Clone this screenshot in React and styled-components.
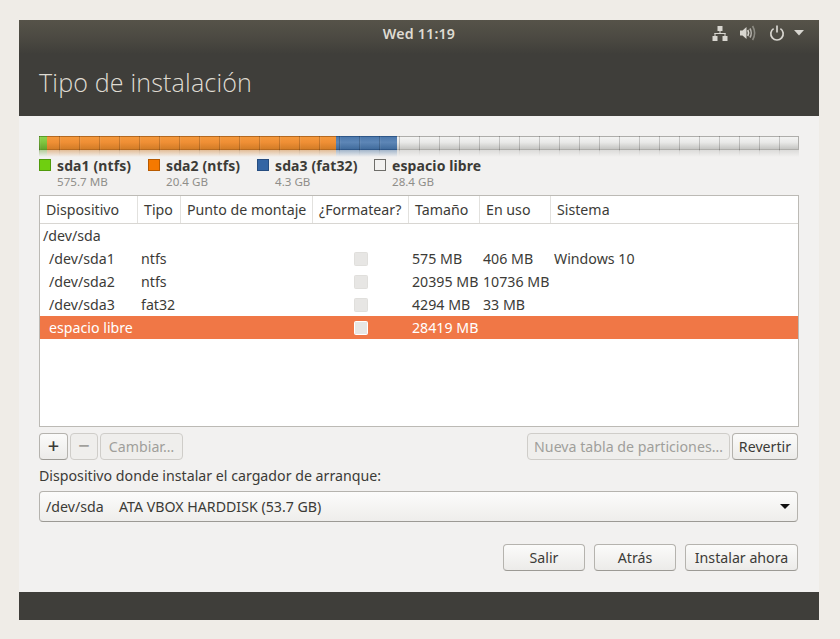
import React from 'react';
import styled, { createGlobalStyle } from 'styled-components';

const Global = createGlobalStyle`
  html, body { margin: 0; padding: 0; background: #efece7; }
  body { font-family: "Noto Sans", "Open Sans", sans-serif; font-size: 14.2px; color: #3c3b37; }
`;

const Page = styled.div`
  width: 840px;
  height: 639px;
  padding: 20px 21px 19px 19px;
  box-sizing: border-box;
  overflow: hidden;
`;

const Window = styled.div`
  height: 600px;
  display: flex;
  flex-direction: column;
  background: #f2f1f0;
`;

const Header = styled.header`
  height: 96px;
  flex: none;
  background: linear-gradient(#565349 0, #4a4841 20px, #3f3e3a 34px, #3f3e3a 100%);
  display: flex;
  flex-direction: column;
  color: #dfdbd2;
`;

const Panel = styled.div`
  height: 26px;
  position: relative;
  display: flex;
  align-items: center;
  justify-content: center;
  font-weight: 600;
  font-size: 14.2px;
  letter-spacing: 0.2px;
`;

const Indicators = styled.div`
  position: absolute;
  left: 693px;
  top: 5px;
  display: flex;
  align-items: center;
  color: #d8d6d0;
`;

const Title = styled.h1`
  margin: 20px 0 0 20px;
  font-size: 25.1px;
  line-height: 32px;
  font-weight: 300;
  letter-spacing: 0.15px;
  font-family: "Open Sans", "Noto Sans", sans-serif;
  color: #dfdbd2;
`;

const Body = styled.main`
  flex: 1;
  padding: 20px 20px 0 20px;
  display: flex;
  flex-direction: column;
`;

const Bar = styled.div`
  position: relative;
  height: 14px;
  display: flex;
  &::after {
    content: "";
    position: absolute;
    inset: 0 0 -6px 0;
    background: repeating-linear-gradient(90deg, rgba(0, 0, 0, 0.18) 0 1px, rgba(255, 255, 255, 0.05) 1px 2px, transparent 2px 20px);
    mask-image: linear-gradient(#000 14px, rgba(0, 0, 0, 0.3) 15px, transparent 20px);
  }
`;

const Segment = styled.div`
  width: ${(p) => p.$w}px;
  flex: ${(p) => (p.$w ? 'none' : 1)};
  position: relative;
  background: linear-gradient(${(p) => p.$top}, ${(p) => p.$mid} 45%, ${(p) => p.$low} 100%);
  box-shadow: inset 0 1px ${(p) => p.$edge}, inset 0 -1px ${(p) => p.$edge}${(p) => (p.$w ? '' : `, inset -1px 0 ${p.$edge}`)};
  &::after {
    content: "";
    position: absolute;
    left: 0;
    right: 0;
    top: 100%;
    height: 7px;
    background: linear-gradient(${(p) => p.$low}70, transparent);
  }
`;

const Legend = styled.div`
  display: flex;
  margin-top: 8px;
  height: 30px;
`;

const LegendItem = styled.div`
  width: ${(p) => p.$w}px;
  flex: none;
  display: flex;
  gap: 6px;
`;

const Swatch = styled.span`
  width: 10px;
  height: 10px;
  margin-top: 1px;
  flex: none;
  background: ${(p) => p.$c};
  border: 1px solid ${(p) => p.$b};
`;

const LegendText = styled.div`
  display: flex;
  flex-direction: column;
`;

const LegendName = styled.span`
  font-weight: 700;
  font-size: 14px;
  line-height: 16px;
  white-space: nowrap;
  letter-spacing: 0.1px;
`;

const LegendSize = styled.span`
  font-size: 11.6px;
  line-height: 15px;
  color: #8f8e8a;
`;

const Table = styled.div`
  margin-top: 7px;
  height: 232px;
  box-sizing: border-box;
  background: #fff;
  border: 1px solid #bcbab5;
`;

const cols = '98px 43px 132px 96px 71px 71px 1fr';

const HeaderRow = styled.div`
  display: grid;
  grid-template-columns: ${cols};
  height: 28px;
  box-sizing: border-box;
  border-bottom: 1px solid #d8d6d2;
`;

const HeaderCell = styled.div`
  display: flex;
  align-items: center;
  padding-left: 6px;
  border-right: 1px solid #e2e1de;
  white-space: nowrap;
  &:last-child { border-right: none; }
`;

const DiskRow = styled.div`
  height: 23px;
  line-height: 23px;
  padding-left: 3px;
`;

const Row = styled.div`
  display: grid;
  grid-template-columns: ${cols};
  height: 23px;
  align-items: center;
  background: ${(p) => (p.$selected ? '#f07746' : 'transparent')};
  color: ${(p) => (p.$selected ? '#fff' : 'inherit')};
`;

const Cell = styled.div`
  padding-left: ${(p) => p.$pad || 3}px;
  white-space: nowrap;
`;

const CheckCell = styled.div`
  display: flex;
  padding-left: 41px;
`;

const Check = styled.span`
  width: 12px;
  height: 12px;
  background: #e7e6e4;
  border: 1px solid ${(p) => (p.$selected ? '#fff' : '#e0dfdc')};
  border-radius: 1.5px;
`;

const Actions = styled.div`
  display: flex;
  margin: 6px 1px 0 0;
  gap: 2px;
`;

const Button = styled.button`
  height: 27px;
  width: ${(p) => p.$w}px;
  padding: 0;
  box-sizing: border-box;
  font: inherit;
  color: #3c3b37;
  border-radius: 4px;
  border: 1px solid #b5b3ae;
  border-bottom-color: #9c9a95;
  background: linear-gradient(#fbfbfa, #ecebe9);
  white-space: nowrap;
  &:disabled {
    color: #a09f9b;
    background: #efeeec;
    border-color: #cfcdc9;
  }
`;

const Sign = styled.span`
  font-size: 20px;
  line-height: 20px;
  font-weight: 500;
`;

const Spacer = styled.div`
  flex: 1;
`;

const BootLabel = styled.div`
  margin-top: 6px;
  line-height: 20px;
`;

const Select = styled.div`
  margin: 5px 1px 0 0;
  height: 31px;
  box-sizing: border-box;
  border-radius: 4px;
  border: 1px solid #b5b3ae;
  border-bottom-color: #9c9a95;
  background: linear-gradient(#fcfcfb, #eeedeb);
  display: flex;
  align-items: center;
  padding: 0 7px 0 6px;
`;

const SelectName = styled.span`
  width: 73px;
`;

const Caret = styled.span`
  width: 0;
  height: 0;
  border-left: 5px solid transparent;
  border-right: 5px solid transparent;
  border-top: 5px solid #111;
`;

const Nav = styled.div`
  margin: 22px 1px 0 0;
  display: flex;
  justify-content: flex-end;
  gap: 9px;
`;

const Footer = styled.footer`
  height: 28px;
  flex: none;
  background: #3f3e3a;
`;

const NetworkIcon = () => (
  <svg width="16" height="16" viewBox="0 0 16 16" fill="currentColor" style={{ marginRight: 12 }}>
    <rect x="5.5" y="1" width="5" height="5" />
    <rect x="0.5" y="11" width="5" height="5" />
    <rect x="10.5" y="11" width="5" height="5" />
    <rect x="7.5" y="6" width="1" height="3" />
    <rect x="2.5" y="8" width="11" height="1" />
    <rect x="2.5" y="8" width="1" height="3" />
    <rect x="12.5" y="8" width="1" height="3" />
  </svg>
);

const VolumeIcon = () => (
  <svg width="16" height="16" viewBox="0 0 16 16" fill="none" style={{ marginRight: 13 }}>
    <path d="M0 5.5H2.5L6.5 2V14L2.5 10.5H0Z" fill="currentColor" />
    <path d="M7.8 5C8.9 7 8.9 9 7.8 11" stroke="currentColor" strokeWidth="1.6" />
    <path d="M9.9 3.5C11.6 6 11.6 10 9.9 12.5" stroke="currentColor" strokeWidth="1.6" opacity="0.75" />
    <path d="M12.6 1C15.2 5.5 15.2 10.5 12.6 15" stroke="currentColor" strokeWidth="1.6" opacity="0.45" />
  </svg>
);

const PowerIcon = () => (
  <svg width="16" height="16" viewBox="0 0 16 16" fill="none" stroke="currentColor" strokeWidth="1.7" style={{ marginRight: 9 }}>
    <path d="M4.6 3.6A6.2 6.2 0 1 0 11.4 3.6" />
    <path d="M8 0.5V7.5" />
  </svg>
);

const MenuCaret = () => (
  <svg width="10" height="6" viewBox="0 0 10 6" fill="currentColor">
    <path d="M0 0H10L5 5.5Z" />
  </svg>
);

const segments = [
  { w: 8, top: '#8fd651', mid: '#7ec43f', low: '#62a02c', edge: '#5a9a28' },
  { w: 289, top: '#f59a3e', mid: '#ef8f35', low: '#cf7a25', edge: '#b5691f' },
  { w: 61, top: '#4a76ab', mid: '#5d86b6', low: '#3d6899', edge: '#2f5788' },
  { w: 0, top: '#f5f5f4', mid: '#e9e9e8', low: '#c0c0bd', edge: '#aeadaa' },
];

const legend = [
  { w: 109, name: 'sda1 (ntfs)', size: '575.7 MB', c: '#6fcf10', b: '#4f9a0a' },
  { w: 109, name: 'sda2 (ntfs)', size: '20.4 GB', c: '#f57900', b: '#b85a00' },
  { w: 117, name: 'sda3 (fat32)', size: '4.3 GB', c: '#3465a4', b: '#264d80' },
  { w: 120, name: 'espacio libre', size: '28.4 GB', c: '#f2f1f0', b: '#6e6d69' },
];

const columns = ['Dispositivo', 'Tipo', 'Punto de montaje', '¿Formatear?', 'Tamaño', 'En uso', 'Sistema'];

const rows = [
  { dev: '/dev/sda1', type: 'ntfs', size: '575 MB', used: '406 MB', system: 'Windows 10' },
  { dev: '/dev/sda2', type: 'ntfs', size: '20395 MB', used: '10736 MB', system: '' },
  { dev: '/dev/sda3', type: 'fat32', size: '4294 MB', used: '33 MB', system: '' },
  { dev: 'espacio libre', type: '', size: '28419 MB', used: '', system: '', selected: true },
];

export default function App() {
  return (
    <Page>
      <Global />
      <Window>
        <Header>
          <Panel>
            Wed 11:19
            <Indicators>
              <NetworkIcon />
              <VolumeIcon />
              <PowerIcon />
              <MenuCaret />
            </Indicators>
          </Panel>
          <Title>Tipo de instalación</Title>
        </Header>
        <Body>
          <Bar>
            {segments.map((s) => (
              <Segment key={s.top} $w={s.w} $top={s.top} $mid={s.mid} $low={s.low} $edge={s.edge} />
            ))}
          </Bar>
          <Legend>
            {legend.map((l) => (
              <LegendItem key={l.name} $w={l.w}>
                <Swatch $c={l.c} $b={l.b} />
                <LegendText>
                  <LegendName>{l.name}</LegendName>
                  <LegendSize>{l.size}</LegendSize>
                </LegendText>
              </LegendItem>
            ))}
          </Legend>
          <Table>
            <HeaderRow>
              {columns.map((c) => (
                <HeaderCell key={c}>{c}</HeaderCell>
              ))}
            </HeaderRow>
            <DiskRow>/dev/sda</DiskRow>
            {rows.map((r) => (
              <Row key={r.dev} $selected={r.selected}>
                <Cell $pad={9}>{r.dev}</Cell>
                <Cell>{r.type}</Cell>
                <Cell />
                <CheckCell>
                  <Check $selected={r.selected} />
                </CheckCell>
                <Cell>{r.size}</Cell>
                <Cell>{r.used}</Cell>
                <Cell>{r.system}</Cell>
              </Row>
            ))}
          </Table>
          <Actions>
            <Button $w={29}>
              <Sign>+</Sign>
            </Button>
            <Button $w={28} disabled>
              <Sign>−</Sign>
            </Button>
            <Button $w={83} disabled>
              Cambiar…
            </Button>
            <Spacer />
            <Button $w={203} disabled>
              Nueva tabla de particiones…
            </Button>
            <Button $w={66}>Revertir</Button>
          </Actions>
          <BootLabel>Dispositivo donde instalar el cargador de arranque:</BootLabel>
          <Select>
            <SelectName>/dev/sda</SelectName>
            <span>ATA VBOX HARDDISK (53.7 GB)</span>
            <Spacer />
            <Caret />
          </Select>
          <Nav>
            <Button $w={82}>Salir</Button>
            <Button $w={82}>Atrás</Button>
            <Button $w={113}>Instalar ahora</Button>
          </Nav>
        </Body>
        <Footer />
      </Window>
    </Page>
  );
}
